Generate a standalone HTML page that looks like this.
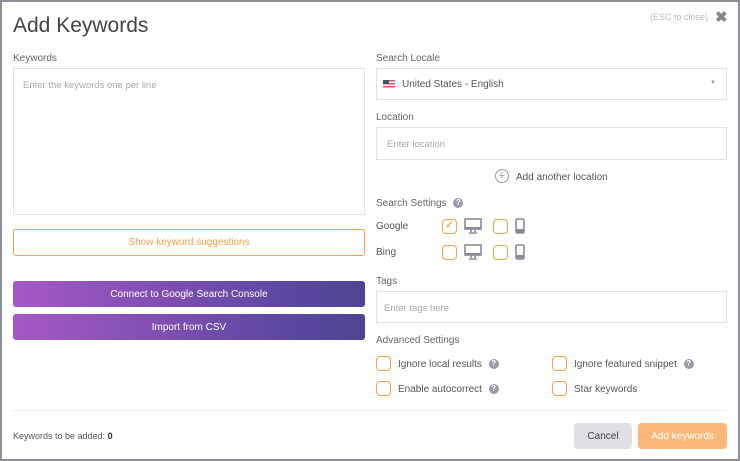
<!DOCTYPE html>
<html><head><style>
*{box-sizing:border-box;margin:0;padding:0}
body{width:740px;height:461px;background:#fff;font-family:"Liberation Sans",sans-serif;color:#555;position:relative;overflow:hidden}
.frame{position:absolute;left:0;top:0;width:740px;height:461px;border:2px solid #8d8d96}
.a{position:absolute}
.lbl{font-size:10px;color:#666;margin-top:1px}
.box{border:1px solid #e1e1ea;background:#fff}
.ph{font-size:9.5px;color:#aaa;margin-top:1px}
.cb{position:absolute;width:15px;height:15px;border:1.5px solid #f7a14a;border-radius:4px}
.q{display:inline-block;width:10px;height:10px;border-radius:50%;background:#9a9aa8;color:#fff;font-size:8px;line-height:10px;text-align:center;font-weight:bold;vertical-align:middle;margin-left:4px}
.t{font-size:10px;color:#555;margin-top:2px}
.grad{background:linear-gradient(90deg,#a658c8,#5a47a0 80%,#4e4592);color:#fff;font-size:10px;text-align:center;border-radius:3px}
</style></head><body>
<div class="frame"></div>
<div class="a" style="left:13px;top:14px;font-size:21px;color:#444">Add Keywords</div>
<div class="a" style="left:650px;top:12px;font-size:9px;color:#bbb">(ESC to close)</div>
<div class="a" style="left:715px;top:8px;font-size:15px;color:#888;font-weight:bold">✖</div>

<div class="a lbl" style="left:13px;top:52px">Keywords</div>
<div class="a box" style="left:13px;top:68px;width:352px;height:147px"></div>
<div class="a ph" style="left:23px;top:79px">Enter the keywords one per line</div>
<div class="a" style="left:13px;top:229px;width:352px;height:27px;border:1px solid #f7a14a;border-radius:3px;color:#f7a14a;font-size:10px;text-align:center;line-height:26px">Show keyword suggestions</div>
<div class="a grad" style="left:13px;top:281px;width:352px;height:26px;line-height:27px">Connect to Google Search Console</div>
<div class="a grad" style="left:13px;top:314px;width:352px;height:26px;line-height:27px">Import from CSV</div>

<div class="a lbl" style="left:376px;top:52px">Search Locale</div>
<div class="a box" style="left:376px;top:68px;width:351px;height:32px"></div>
<div class="a" style="left:383px;top:80px;width:12px;height:8px;background:repeating-linear-gradient(#e46 0 1.5px,#fff 1.5px 3px)"><div style="width:6px;height:4px;background:#456"></div></div>
<div class="a t" style="left:402px;top:77px">United States - English</div>
<div class="a" style="left:710px;top:80px;font-size:6px;color:#999">▼</div>

<div class="a lbl" style="left:376px;top:111px">Location</div>
<div class="a box" style="left:376px;top:127px;width:351px;height:33px"></div>
<div class="a ph" style="left:387px;top:138px">Enter location</div>
<div class="a" style="left:495px;top:169px;width:14px;height:14px;border:1px solid #999;border-radius:50%;font-size:11px;line-height:12px;text-align:center;color:#999">+</div>
<div class="a t" style="left:516px;top:170px">Add another location</div>

<div class="a lbl" style="left:376px;top:197px">Search Settings <span class="q">?</span></div>
<div class="a t" style="left:376px;top:219px">Google</div>
<div class="a t" style="left:376px;top:245px">Bing</div>
<div class="cb" style="left:442px;top:219px;color:#f7a14a;font-size:10px;line-height:12px;text-align:center;font-weight:bold">✓</div>
<div class="cb" style="left:493px;top:219px"></div>
<div class="cb" style="left:442px;top:245px"></div>
<div class="cb" style="left:493px;top:245px"></div>
<svg class="a" style="left:464px;top:218px" width="18" height="16"><rect x="1" y="1" width="16" height="10" fill="none" stroke="#8a8a96" stroke-width="1.6"/><rect x="1" y="9" width="16" height="2" fill="#8a8a96"/><path d="M7 12v2M11 12v2M5 15h8" stroke="#8a8a96" stroke-width="1.6"/></svg>
<svg class="a" style="left:464px;top:244px" width="18" height="16"><rect x="1" y="1" width="16" height="10" fill="none" stroke="#8a8a96" stroke-width="1.6"/><rect x="1" y="9" width="16" height="2" fill="#8a8a96"/><path d="M7 12v2M11 12v2M5 15h8" stroke="#8a8a96" stroke-width="1.6"/></svg>
<svg class="a" style="left:515px;top:218px" width="10" height="16"><rect x="1" y="1" width="8" height="14" rx="1.5" fill="none" stroke="#8a8a96" stroke-width="1.6"/><rect x="1" y="11" width="8" height="4" fill="#8a8a96"/></svg>
<svg class="a" style="left:515px;top:244px" width="10" height="16"><rect x="1" y="1" width="8" height="14" rx="1.5" fill="none" stroke="#8a8a96" stroke-width="1.6"/><rect x="1" y="11" width="8" height="4" fill="#8a8a96"/></svg>

<div class="a lbl" style="left:376px;top:275px">Tags</div>
<div class="a box" style="left:376px;top:291px;width:351px;height:32px"></div>
<div class="a ph" style="left:384px;top:302px">Enter tags here</div>

<div class="a lbl" style="left:376px;top:334px">Advanced Settings</div>
<div class="cb" style="left:376px;top:356px"></div>
<div class="cb" style="left:376px;top:381px"></div>
<div class="cb" style="left:552px;top:356px"></div>
<div class="cb" style="left:552px;top:381px"></div>
<div class="a t" style="left:398px;top:357px">Ignore local results <span class="q">?</span></div>
<div class="a t" style="left:398px;top:382px">Enable autocorrect <span class="q">?</span></div>
<div class="a t" style="left:574px;top:357px">Ignore featured snippet <span class="q">?</span></div>
<div class="a t" style="left:574px;top:382px">Star keywords</div>

<div class="a" style="left:13px;top:410px;width:714px;height:1px;background:#ececf0"></div>
<div class="a" style="left:13px;top:431px;font-size:9px;color:#555">Keywords to be added: <b style="color:#333">0</b></div>
<div class="a" style="left:574px;top:423px;width:58px;height:26px;background:#dfdfe4;border-radius:4px;font-size:10px;color:#444;text-align:center;line-height:27px">Cancel</div>
<div class="a" style="left:638px;top:423px;width:89px;height:26px;background:#fdb879;border-radius:4px;font-size:10px;color:#fff;text-align:center;line-height:27px">Add keywords</div>
</body></html>
